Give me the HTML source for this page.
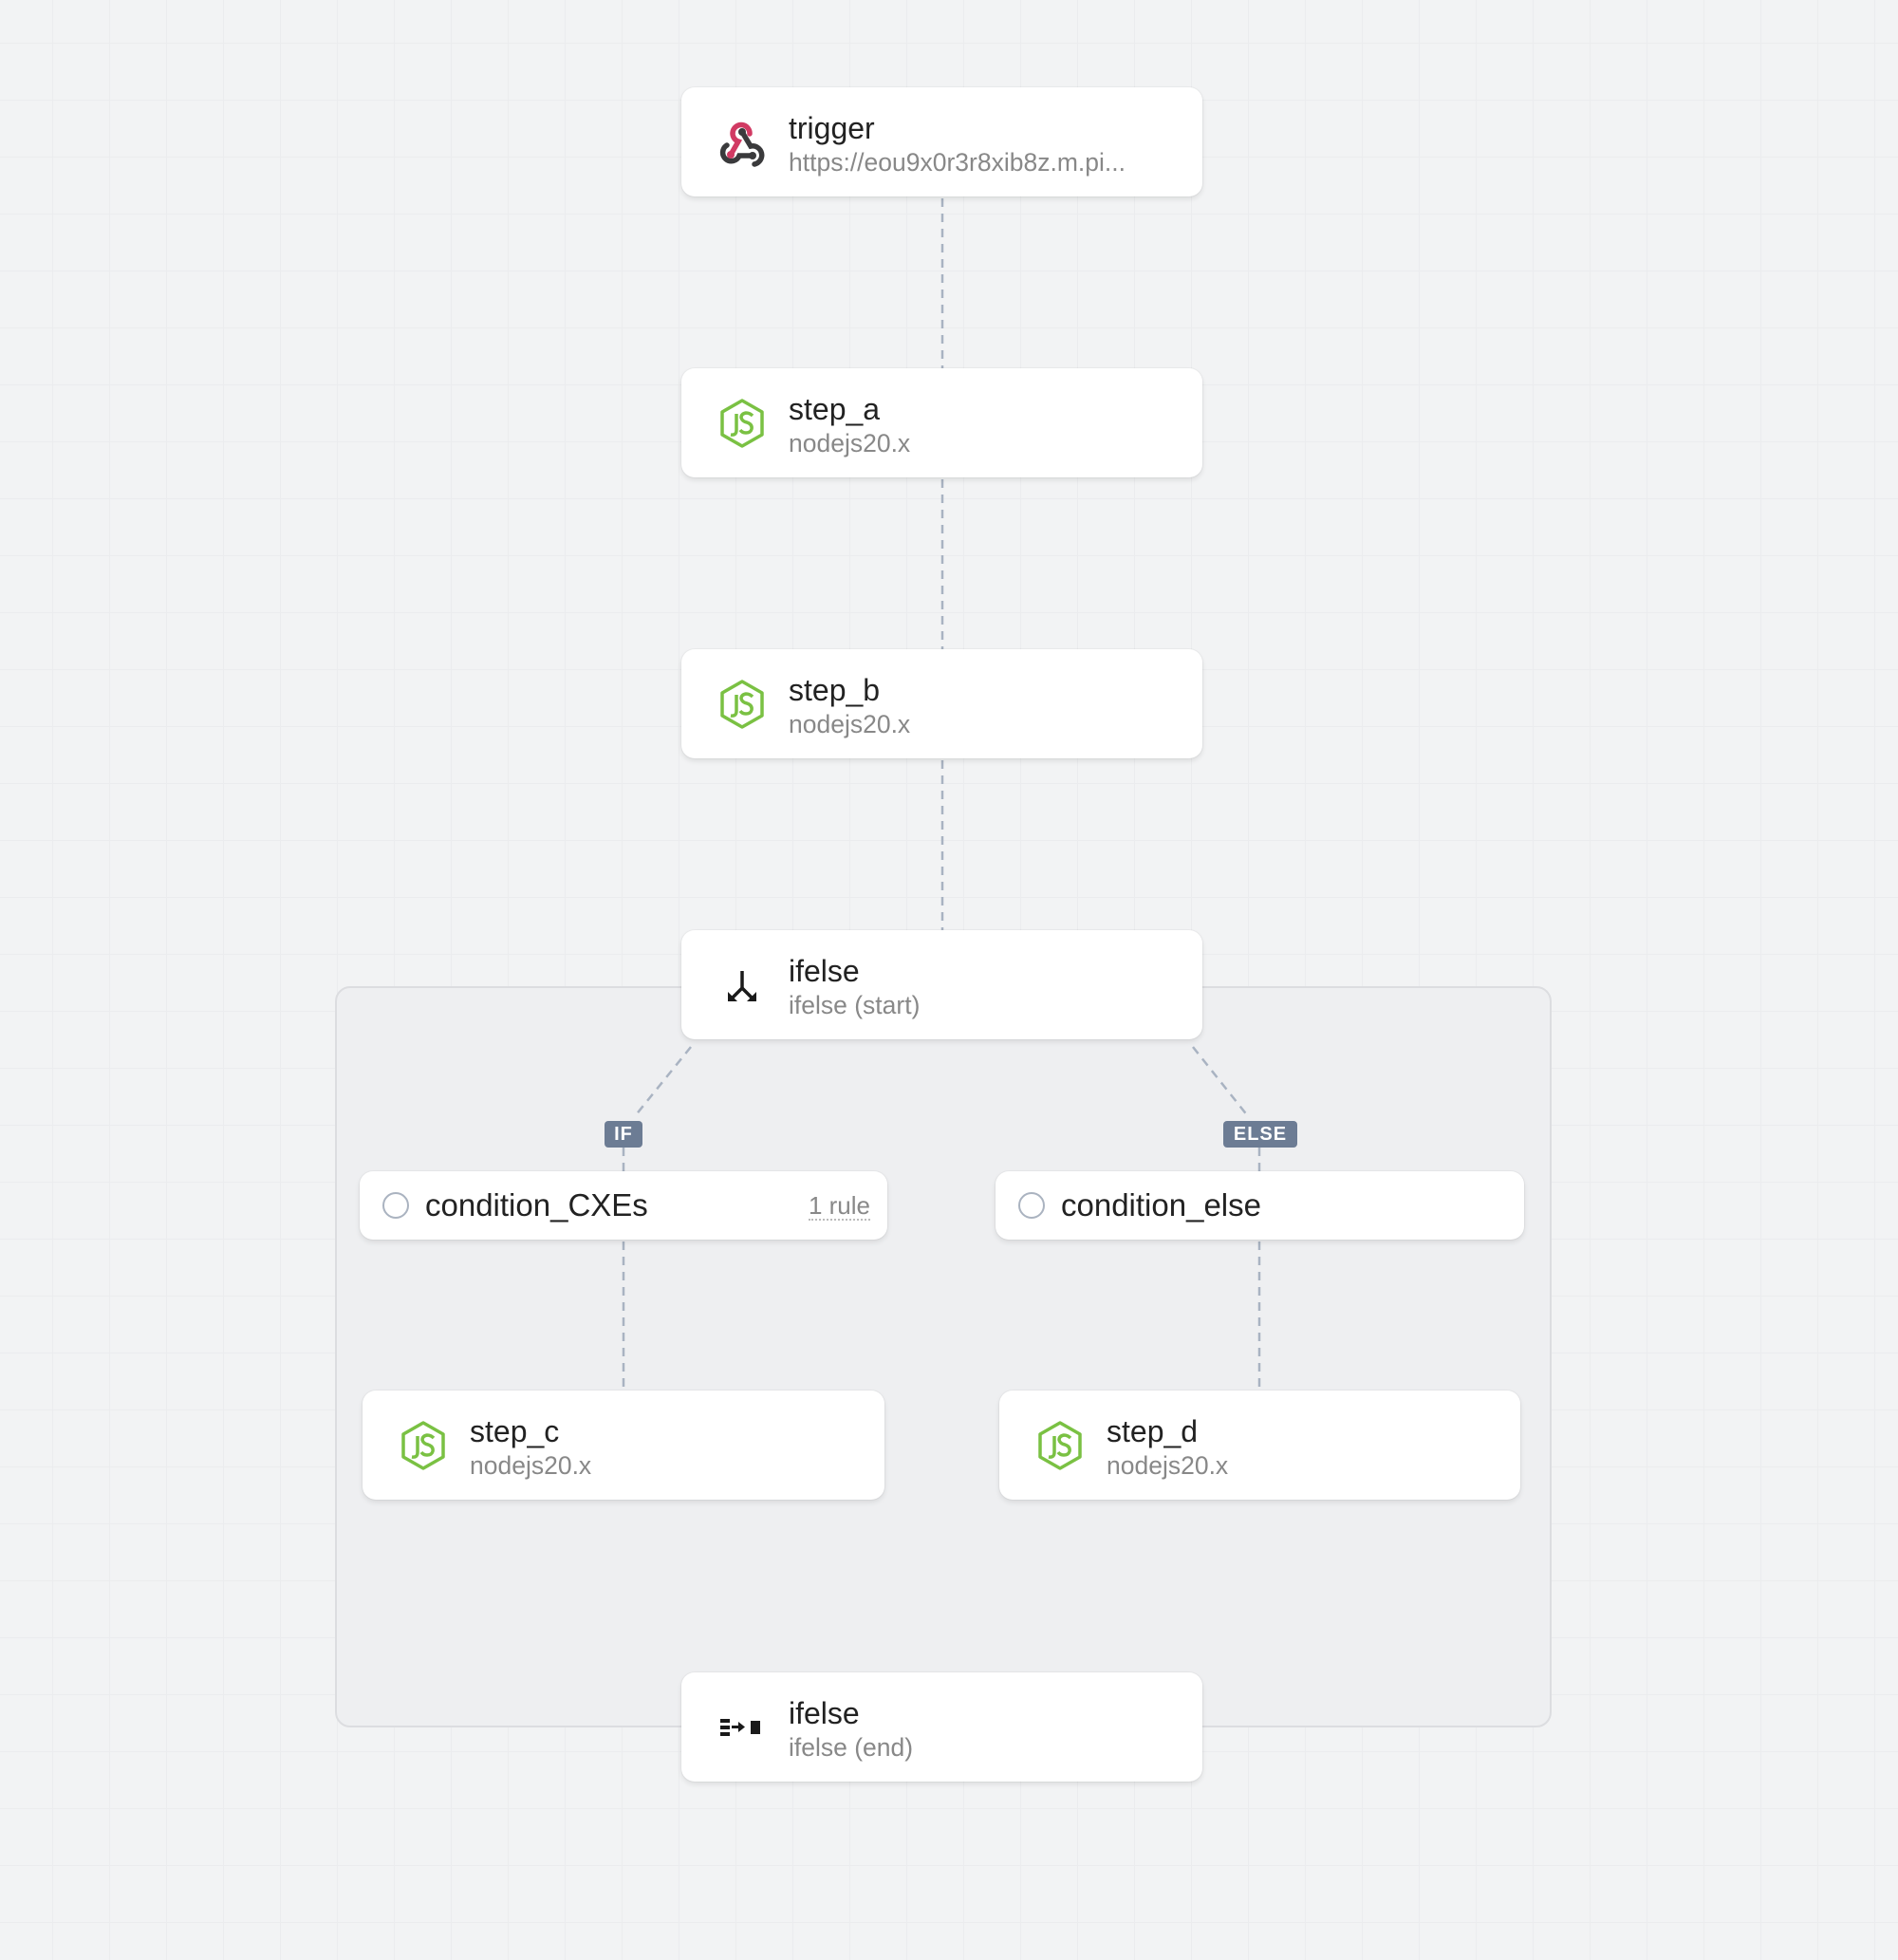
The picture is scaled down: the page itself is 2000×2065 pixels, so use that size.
<!DOCTYPE html>
<html><head><meta charset="utf-8"><style>
html,body{margin:0;padding:0}
body{width:2000px;height:2065px;position:relative;overflow:hidden;font-family:"Liberation Sans",sans-serif;
background-color:#f2f3f4;
background-image:linear-gradient(to right,#ebecee 1px,transparent 1px),linear-gradient(to bottom,#ebecee 1px,transparent 1px);
background-size:60px 60px;background-position:55px 45px}
.group{position:absolute;left:353px;top:1039px;width:1278px;height:777px;background:#eeeff1;border:2px solid #dcdde0;border-radius:16px}
.card{position:absolute;background:#fff;border-radius:14px;box-shadow:0 3px 6px rgba(0,0,0,.09),0 0 0 1px rgba(0,0,0,.03);width:549px;height:115px}
.t{position:absolute;left:113px;top:25px;font-size:32px;color:#222;white-space:nowrap}
.s{position:absolute;left:113px;top:64px;font-size:26.5px;color:#888;white-space:nowrap}
.ic{position:absolute;left:37px;top:31px;width:54px;height:54px}
.cond{position:absolute;background:#fff;border-radius:14px;box-shadow:0 3px 6px rgba(0,0,0,.09),0 0 0 1px rgba(0,0,0,.03);height:72px}
.cond .c{position:absolute;left:24px;top:22px;width:24px;height:24px;border:2px solid #aab3c0;border-radius:50%}
.cond .n{position:absolute;left:69px;top:17px;font-size:33px;color:#222}
.lab{position:absolute;background:#6c7c94;color:#fff;font-size:20px;font-weight:bold;text-align:center;line-height:28px;height:28px;border-radius:4px;letter-spacing:1px}
svg.lines{position:absolute;left:0;top:0}
</style></head><body>
<div class="group"></div>
<svg class="lines" width="2000" height="2065">
<g stroke="#a9b3c2" stroke-width="2.5" stroke-dasharray="9 7" fill="none">
<line x1="993" y1="209" x2="993" y2="388"/>
<line x1="993" y1="505" x2="993" y2="684"/>
<line x1="993" y1="801" x2="993" y2="980"/>
<line x1="728" y1="1103" x2="669" y2="1176"/>
<line x1="657" y1="1209" x2="657" y2="1234"/>
<line x1="657" y1="1308" x2="657" y2="1465"/>
<line x1="1257" y1="1103" x2="1315" y2="1176"/>
<line x1="1327" y1="1209" x2="1327" y2="1234"/>
<line x1="1327" y1="1308" x2="1327" y2="1465"/>
</g></svg>
<div class="lab" style="left:637px;top:1181px;width:40px">IF</div>
<div class="lab" style="left:1289px;top:1181px;width:78px">ELSE</div>

<div class="card" style="left:718px;top:92px">
<svg class="ic" viewBox="0 0 54 54"><g fill="none" stroke-width="5.5" stroke-linecap="round">
<path d="M15 40 L23 26 A9 9 0 1 1 35 18" stroke="#d13a63"/>
<path d="M11 30 A9 9 0 1 0 24 41 L38 41" stroke="#3a3a3c"/>
<path d="M27 16 L36 31 A9 9 0 1 1 40 50" stroke="#3a3a3c"/></g>
<circle cx="27" cy="16" r="4" fill="#3a3a3c"/><circle cx="15" cy="40" r="4" fill="#d13a63"/><circle cx="38" cy="41" r="4" fill="#3a3a3c"/></svg>
<div class="t">trigger</div><div class="s">https://eou9x0r3r8xib8z.m.pi...</div></div>

<svg width="0" height="0" style="position:absolute"><defs><g id="js">
<path d="M27 3 L48 15 L48 39 L27 51 L6 39 L6 15 Z" fill="none" stroke="#7ac143" stroke-width="3.5" stroke-linejoin="round"/>
<path d="M21 17 V34 Q21 40 15 39" fill="none" stroke="#7ac143" stroke-width="3.5"/>
<path d="M38 19 Q35 16 31 16 Q26 17 26 21 Q27 25 32 26 Q38 28 37 33 Q36 37 31 37 Q27 37 25 34" fill="none" stroke="#7ac143" stroke-width="3.5"/>
</g></defs></svg>

<div class="card" style="left:718px;top:388px"><svg class="ic" viewBox="0 0 54 54"><use href="#js"/></svg><div class="t">step_a</div><div class="s">nodejs20.x</div></div>
<div class="card" style="left:718px;top:684px"><svg class="ic" viewBox="0 0 54 54"><use href="#js"/></svg><div class="t">step_b</div><div class="s">nodejs20.x</div></div>
<div class="card" style="left:718px;top:980px"><svg class="ic" viewBox="0 0 54 54"><g fill="none" stroke="#1a1a1a" stroke-width="3.5"><path d="M27 12 V30 L17 40"/><path d="M27 30 L37 40"/></g><path d="M12 34 V44 H22 Z" fill="#1a1a1a"/><path d="M42 34 V44 H32 Z" fill="#1a1a1a"/></svg><div class="t">ifelse</div><div class="s">ifelse (start)</div></div>

<div class="cond" style="left:379px;top:1234px;width:556px"><div class="c"></div><div class="n">condition_CXEs</div>
<div style="position:absolute;right:18px;top:22px;font-size:26px;color:#888;border-bottom:2px dotted #bbb;line-height:28px">1 rule</div></div>
<div class="cond" style="left:1049px;top:1234px;width:557px"><div class="c"></div><div class="n">condition_else</div></div>

<div class="card" style="left:382px;top:1465px;width:550px"><svg class="ic" viewBox="0 0 54 54"><use href="#js"/></svg><div class="t">step_c</div><div class="s">nodejs20.x</div></div>
<div class="card" style="left:1053px;top:1465px;width:549px"><svg class="ic" viewBox="0 0 54 54"><use href="#js"/></svg><div class="t">step_d</div><div class="s">nodejs20.x</div></div>

<div class="card" style="left:718px;top:1762px"><svg class="ic" viewBox="0 0 54 54"><g fill="#1a1a1a"><rect x="4" y="18" width="10" height="4"/><rect x="4" y="25" width="10" height="4"/><rect x="4" y="32" width="10" height="4"/><rect x="16" y="25" width="8" height="3"/><path d="M23 21 L30 26.5 L23 32Z"/><rect x="36" y="20" width="10" height="14"/></g></svg><div class="t">ifelse</div><div class="s">ifelse (end)</div></div>
</body></html>
